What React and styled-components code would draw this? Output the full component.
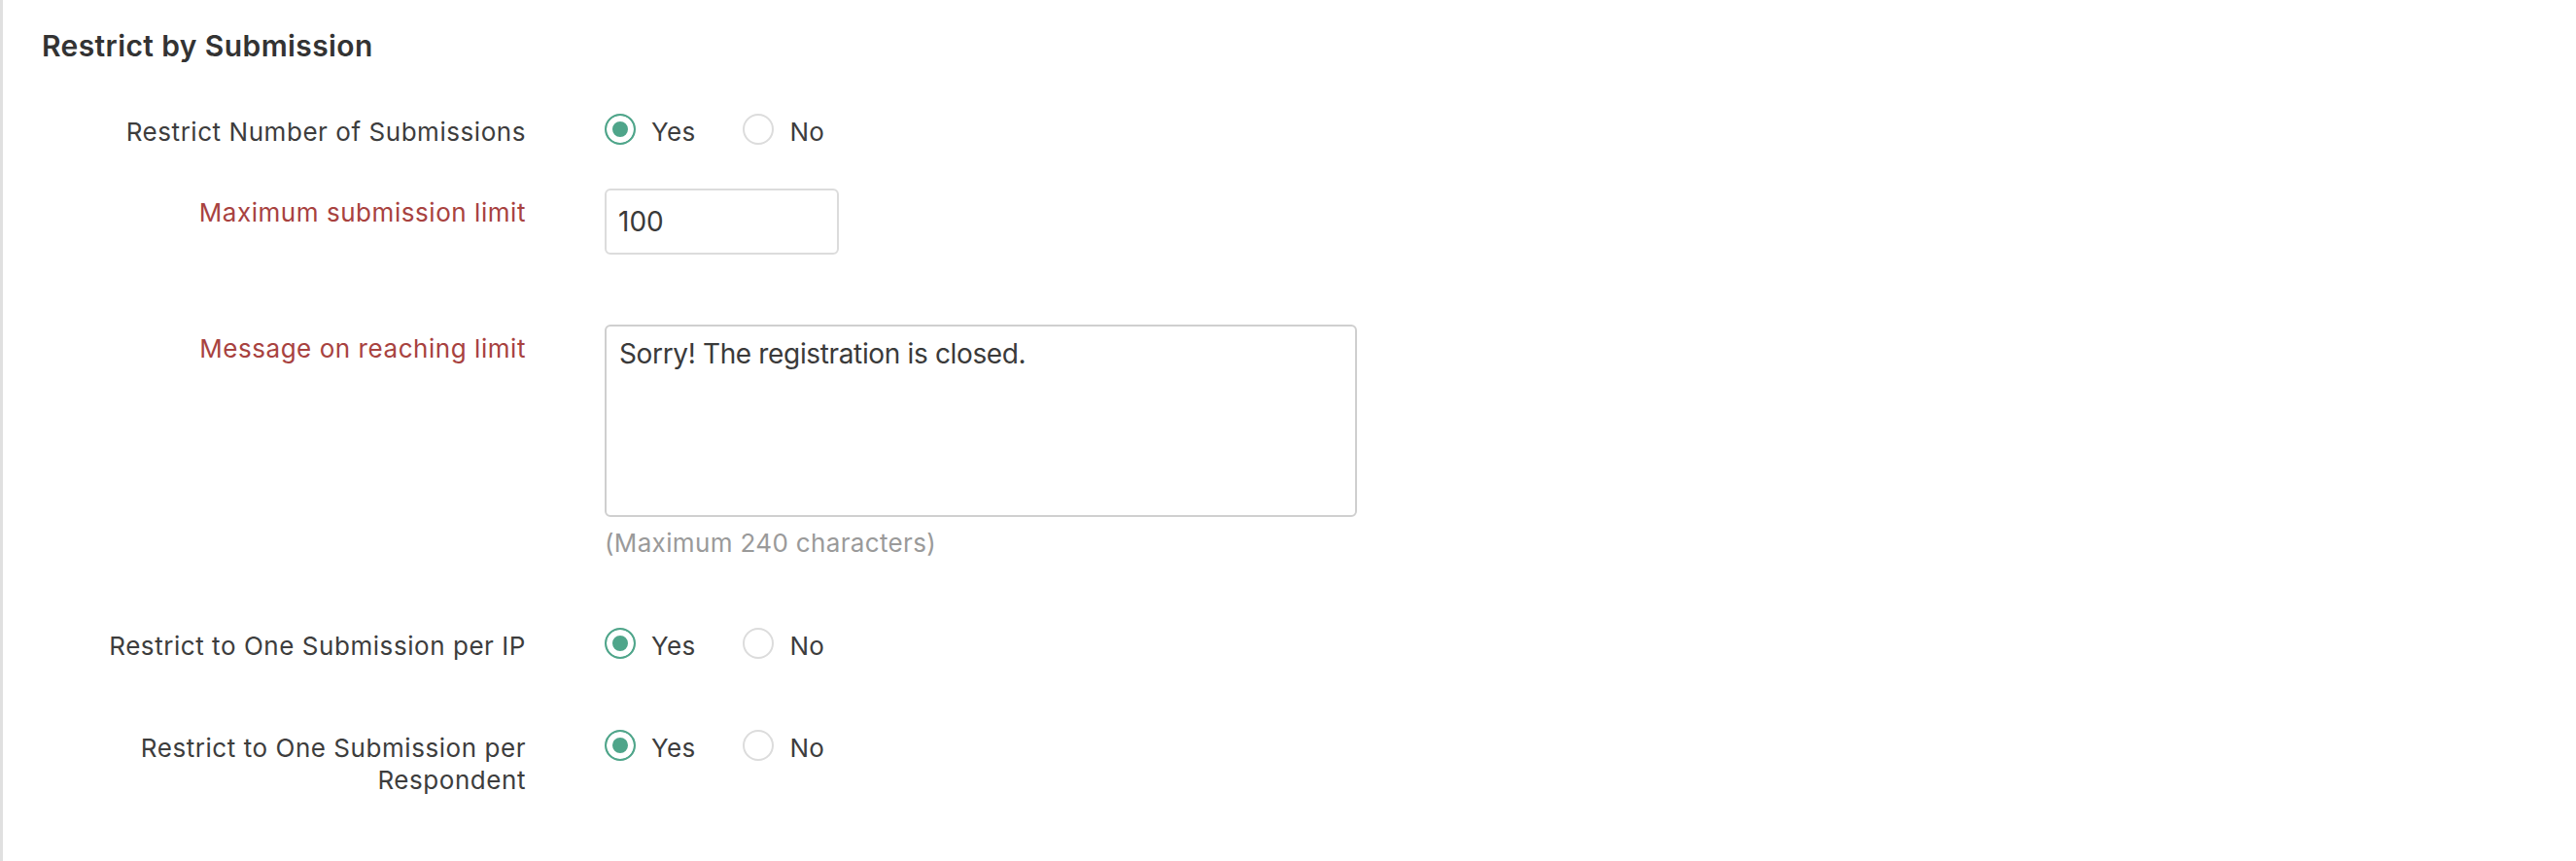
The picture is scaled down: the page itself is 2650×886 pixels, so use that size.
import React from 'react';
import styled, { createGlobalStyle } from 'styled-components';

const GlobalStyle = createGlobalStyle`
  body {
    margin: 0;
    background: #fff;
    font-family: Inter, "Noto Sans", "Liberation Sans", sans-serif;
    color: #3d3d3d;
  }
`;

const Page = styled.div`
  min-height: 886px;
  box-sizing: border-box;
  border-left: 3px solid #e0e0e0;
  padding: 29px 0 0 40px;
`;

const Heading = styled.h2`
  margin: 0;
  font-size: 30px;
  line-height: 36px;
  font-weight: 600;
  letter-spacing: 0.4px;
  color: #333;
`;

const Form = styled.div`
  display: flex;
  flex-direction: column;
  padding: 54px 0 0 37px;
`;

const Row = styled.div`
  display: grid;
  grid-template-columns: 461px 1fr;
  column-gap: 81px;
  align-items: start;
  margin-bottom: ${p => p.$after || 72}px;
`;

const Label = styled.label`
  text-align: right;
  font-size: 26px;
  line-height: 33px;
  letter-spacing: 0.55px;
  padding-top: ${p => (p.$offset ? 8 : 0)}px;
  color: ${p => (p.$required ? '#a8423f' : '#3d3d3d')};
`;

const Control = styled.div`
  display: flex;
  flex-direction: column;
`;

const RadioGroup = styled.div`
  display: flex;
  align-items: center;
  height: 33px;
  gap: 49px;
`;

const Option = styled.label`
  display: flex;
  align-items: center;
  gap: 16px;
  font-size: 26px;
  letter-spacing: 0.3px;
  color: #3d3d3d;
`;

const Radio = styled.input`
  appearance: none;
  margin: 0 0 5px 0;
  width: 32px;
  height: 32px;
  box-sizing: border-box;
  border-radius: 50%;
  border: 2px solid ${p => (p.checked ? '#4fa58a' : '#dcdcdc')};
  background: ${p => (p.checked ? '#4fa58a' : '#fff')};
  box-shadow: inset 0 0 0 6px #fff;
`;

const TextInput = styled.input`
  width: 241px;
  height: 68px;
  box-sizing: border-box;
  border: 2px solid #dcdcdc;
  border-radius: 6px;
  padding: 0 12px;
  font-family: inherit;
  font-size: 28px;
  color: #3a3a3a;
  outline: none;
`;

const TextArea = styled.textarea`
  width: 774px;
  height: 198px;
  box-sizing: border-box;
  border: 2px solid #cfcfcf;
  border-radius: 6px;
  padding: 11px 13px;
  font-family: inherit;
  font-size: 28px;
  line-height: 34px;
  letter-spacing: -0.35px;
  color: #3a3a3a;
  resize: none;
  outline: none;
`;

const Help = styled.div`
  margin-top: 10px;
  font-size: 26px;
  line-height: 34px;
  letter-spacing: 0.35px;
  color: #9a9a9a;
`;

function YesNo({ name }) {
  return (
    <RadioGroup>
      <Option>
        <Radio type="radio" name={name} checked readOnly />
        Yes
      </Option>
      <Option>
        <Radio type="radio" name={name} checked={false} readOnly />
        No
      </Option>
    </RadioGroup>
  );
}

export default function App() {
  return (
    <>
      <GlobalStyle />
      <Page>
        <Heading>Restrict by Submission</Heading>
        <Form>
          <Row $after={42}>
            <Label>Restrict Number of Submissions</Label>
            <YesNo name="limit" />
          </Row>
          <Row>
            <Label $required $offset>Maximum submission limit</Label>
            <Control>
              <TextInput defaultValue="100" />
            </Control>
          </Row>
          <Row>
            <Label $required $offset>Message on reaching limit</Label>
            <Control>
              <TextArea defaultValue="Sorry! The registration is closed." />
              <Help>(Maximum 240 characters)</Help>
            </Control>
          </Row>
          <Row>
            <Label>Restrict to One Submission per IP</Label>
            <YesNo name="ip" />
          </Row>
          <Row>
            <Label>Restrict to One Submission per Respondent</Label>
            <YesNo name="respondent" />
          </Row>
        </Form>
      </Page>
    </>
  );
}
